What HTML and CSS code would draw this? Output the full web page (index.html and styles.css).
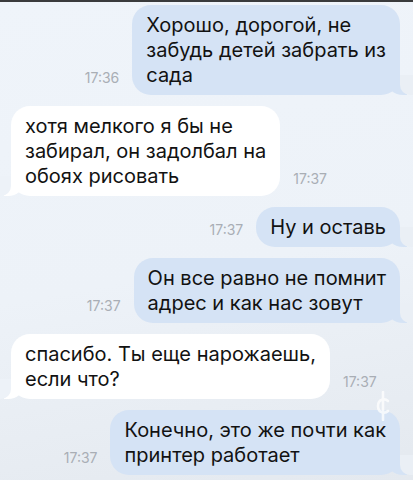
FILE: index.html
```html
<!DOCTYPE html>
<html lang="ru">
<head>
<meta charset="utf-8">
<title>Чат</title>
<link rel="stylesheet" href="styles.css">
</head>
<body>
<div class="top-bar"></div>
<main class="chat">
  <div class="row row--out">
    <span class="time">17:36</span>
    <div class="bubble bubble--out">Хорошо, дорогой, не<br>забудь детей забрать из<br>сада</div>
  </div>
  <div class="row row--in">
    <div class="bubble bubble--in">хотя мелкого я бы не<br>забирал, он задолбал на<br>обоях рисовать</div>
    <span class="time">17:37</span>
  </div>
  <div class="row row--out">
    <span class="time">17:37</span>
    <div class="bubble bubble--out">Ну и оставь</div>
  </div>
  <div class="row row--out">
    <span class="time">17:37</span>
    <div class="bubble bubble--out">Он все равно не помнит<br>адрес и как нас зовут</div>
  </div>
  <div class="row row--in">
    <div class="bubble bubble--in">спасибо. Ты еще нарожаешь,<br>если что?</div>
    <span class="time">17:37</span>
  </div>
  <div class="row row--out">
    <span class="time">17:37</span>
    <div class="bubble bubble--out">Конечно, это же почти как<br>принтер работает</div>
  </div>
</main>
<div class="watermark" aria-hidden="true">
  <svg width="18" height="30" viewBox="0 0 18 30">
    <path d="M9 1 V29" stroke="#fff" stroke-width="2.6" stroke-linecap="round" fill="none"/>
    <path d="M14 10 C11 7 4 8 4 15 C4 22 11 23 14 20" stroke="#fff" stroke-width="2.6" fill="none" stroke-linecap="round"/>
  </svg>
</div>
</body>
</html>
```
FILE: styles.css
```css
html, body {
  margin: 0;
  padding: 0;
}

body {
  position: relative;
  width: 413px;
  height: 480px;
  overflow: hidden;
  background: linear-gradient(170deg, #eff4fa 0%, #edf2f8 55%, #e4e9ef 100%);
  font-family: Inter, "Liberation Sans", Arial, sans-serif;
}

.top-bar {
  height: 2px;
  background: #3a3b3c;
}

.chat {
  display: flex;
  flex-direction: column;
  gap: 11px;
  padding: 3px 13px 0 11px;
}

.row {
  display: flex;
  align-items: flex-end;
  gap: 13px;
}

.row--out {
  justify-content: flex-end;
}

.row--in {
  justify-content: flex-start;
}

.bubble {
  position: relative;
  padding: 7.5px 14px;
  font-size: 20px;
  line-height: 25px;
  color: #121212;
  border-radius: 19px;
  white-space: nowrap;
}

.bubble--out {
  background: #d5e3f5;
}

.bubble--in {
  background: #ffffff;
}

.bubble::before,
.bubble::after {
  content: "";
  position: absolute;
  bottom: 0;
  height: 20px;
}

.bubble--out::before {
  right: -7px;
  width: 20px;
  background: #d5e3f5;
  border-bottom-left-radius: 16px 14px;
}

.bubble--out::after {
  right: -26px;
  width: 26px;
  background: #eaeff5;
  border-bottom-left-radius: 10px;
}

.bubble--in::before {
  left: -7px;
  width: 20px;
  background: #ffffff;
  border-bottom-right-radius: 16px 14px;
}

.bubble--in::after {
  left: -26px;
  width: 26px;
  background: #edf2f8;
  border-bottom-right-radius: 10px;
}

.time {
  font-size: 14px;
  line-height: 14px;
  color: #a9aeb5;
  margin-bottom: 10px;
}

.watermark {
  position: absolute;
  left: 374px;
  top: 391px;
  opacity: 0.75;
}
```
